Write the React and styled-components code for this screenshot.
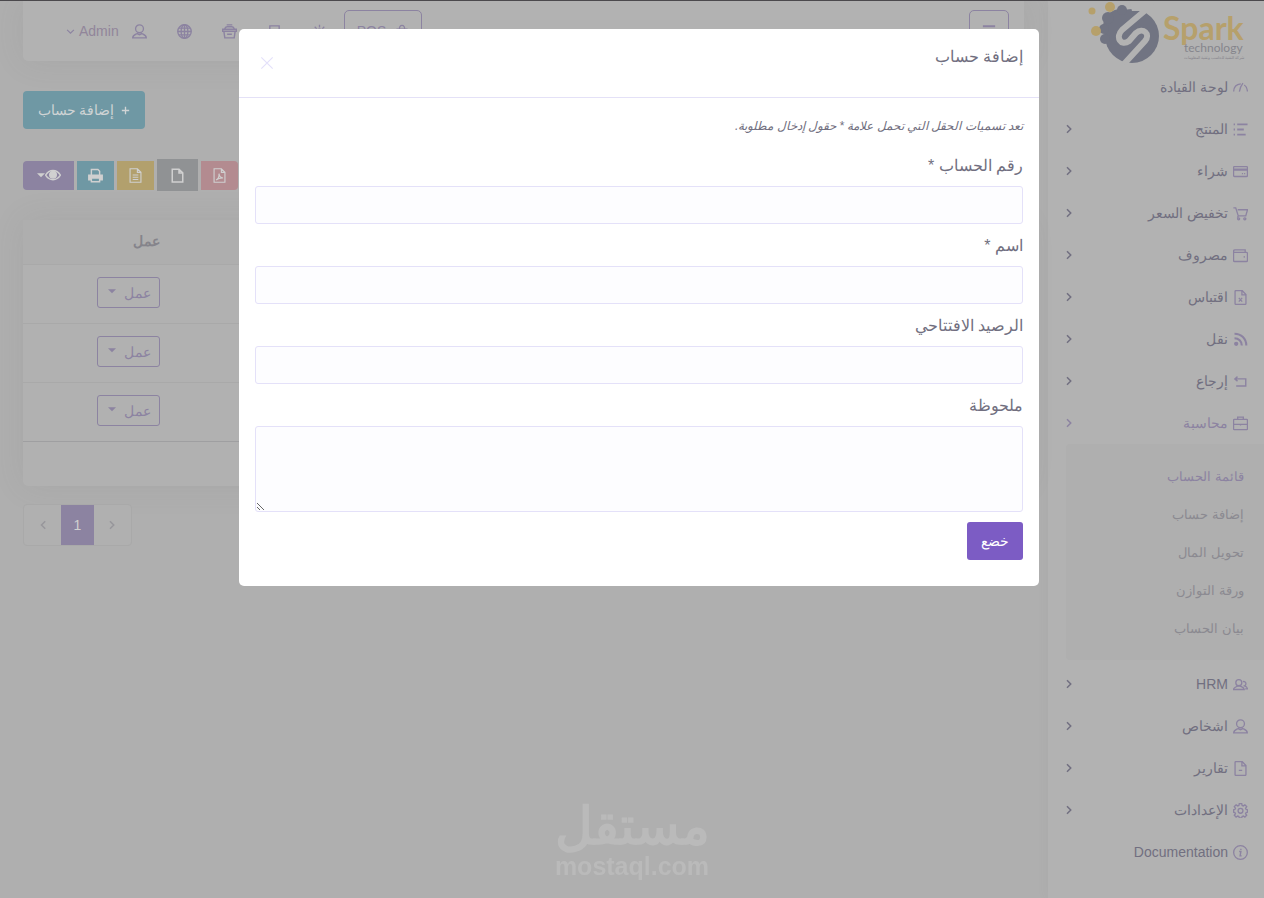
import React from "react";
import styled, { createGlobalStyle } from "styled-components";

const icons = {
  dashboard: (
    <path d="M.7 12.3C.9 7.5 3.4 4.6 8.3 4.2M6.8 12.3c.6-3.4 1.6-6.2 3.8-9M12 5.3c2.2 1.4 3.2 3.8 3.4 7" />
  ),
  list: (
    <path d="M4.5 2.5h11M4.5 8h7M4.5 13.5h9M.7 2.5h1.4M.7 8h1.4M.7 13.5h1.4" strokeWidth="2" />
  ),
  card: (
    <>
      <rect x=".6" y="2.7" width="14.8" height="10.6" rx="1" />
      <path d="M.6 5.4h14.8M.6 6.4h14.8M9.5 10.3h1.2M11.8 10.3H13" />
    </>
  ),
  cart: (
    <>
      <path d="M.4 2h2.5l2.7 8.6h8L15.5 4H5M5.6 10.6l-.9 1.8" />
      <circle cx="6" cy="13.7" r="1.1" />
      <circle cx="12.6" cy="13.7" r="1.1" />
    </>
  ),
  wallet: (
    <>
      <path d="M.6 3.6v9.8c0 .7.4 1 1 1h12.8c.6 0 1-.3 1-1V5.7c0-.6-.4-1-1-1H1.6c-.6 0-1-.4-1-1 0-.9.5-1.8 1.4-1.8h11v2.6" />
      <path d="M11.4 9.5h1.2" strokeWidth="1.8" />
    </>
  ),
  quote: (
    <path d="M9.8.6H3.2c-.6 0-1 .4-1 1v12.8c0 .6.4 1 1 1h9.6c.6 0 1-.4 1-1V4.8zM9.5.8v4.4h4.2M6.2 8.4l3.6 4M9.8 8.4l-3.6 4" />
  ),
  feed: (
    <>
      <path d="M1.6 1.8c7.2 0 12.6 5.4 12.6 12.6M1.6 6.6c4.4 0 7.8 3.4 7.8 7.8" strokeWidth="2.2" />
      <circle cx="3.4" cy="12.6" r="1.6" fill="currentColor" />
    </>
  ),
  back: <path d="M4.8 2.8 2 5.2l2.8 2.4M2.4 5.2h11.2v7.6H3.4" strokeWidth="1.5" />,
  briefcase: (
    <>
      <rect x=".6" y="3.6" width="14.8" height="11" rx=".8" />
      <path d="M5 3.4V1.2h6v2.2M.6 9h5.6M9.8 9h5.6M6.2 9h3.6M8 8.4v1.6" />
    </>
  ),
  users: (
    <>
      <circle cx="6.2" cy="6" r="3.2" />
      <path d="M.6 13.3c0-2 2.4-2.6 4-3.6h3.2c1.8 1 4.2 1.6 4.2 3.6zM10.6 4.9c2-.4 3.2.6 3.2 2.2 0 1.4-.8 2-1.6 2.4 1.8.6 3.2 1.4 3.2 3.2H13" />
    </>
  ),
  user: (
    <>
      <circle cx="8" cy="5.1" r="4.2" />
      <path d="M.7 14.8c0-2.6 2.4-3.4 4.8-4.6l2.5 1.2 2.5-1.2c2.4 1.2 4.8 2 4.8 4.6z" />
    </>
  ),
  report: (
    <path d="M9.8.6H3.2c-.6 0-1 .4-1 1v12.8c0 .6.4 1 1 1h9.6c.6 0 1-.4 1-1V4.8zM9.5.8v4.4h4.2M6.2 10h3.6" />
  ),
  gear: (
    <>
      <path d="M6.7.7h2.6l.4 1.9 1.3.5 1.7-1.1 1.9 1.9-1.2 1.7.6 1.2 1.500.4v2.600l-1.500.4-.6 1.200 1.200 1.700-1.900 1.900-1.700-1.100-1.300.5-.4 1.500H6.700l-.4-1.500-1.300-.5-1.700 1.100-1.900-1.900 1.200-1.700-.6-1.200-1.400-.4V7.200L2 6.800l.6-1.200-1.200-1.700L3.300 2 5 3.100l1.300-.5z" />
      <circle cx="8" cy="8.300" r="2.600" />
    </>
  ),
  info: (
    <>
      <circle cx="8" cy="8" r="7.3" />
      <path d="M6.6 7h1.8L7.6 11.6h1.6M8.4 4v1.4" strokeWidth="1.5" />
    </>
  ),
  globe: (
    <>
      <circle cx="8" cy="8" r="7.2" />
      <ellipse cx="8" cy="8" rx="3.6" ry="7.2" />
      <path d="M8 .8v14.4M.8 8h14.4M1.8 4.4h12.4M1.8 11.6h12.4" />
    </>
  ),
  basket: (
    <>
      <path d="M.6 5.6h14.8v2.2H.6zM2 7.8l1 7h10l1-7M5.5 11h5M2.8 5.4C3.2 3.8 4 3 5.4 3h5.2c1.4 0 2.2.8 2.6 2.4M5 .9h6" strokeWidth="1.5" />
    </>
  ),
  device: <path d="M3 2h10v13H3zM3 12h10" strokeWidth="1.5" />,
  sun: (
    <>
      <circle cx="8" cy="8" r="2.6" />
      <path d="M8 .8v2.800M8 12.400v2.800M.8 8h2.800M12.400 8h2.800M2.900 2.900l2 2M11.100 11.100l2 2M13.100 2.900l-2 2M4.900 11.100l-2 2" />
    </>
  ),
  bag: <path d="M2.400 6h11.200v9H2.400zM5 6c0-6 6-6 6 0" strokeWidth="1.500" />,
  menu: <path d="M1 2.500h14M1 8h14M1 13.500h14" strokeWidth="2.200" />,
  chevronRight: <path d="m4 3 5 5-5 5" strokeWidth="2" />,
  chevronLeft: <path d="m11 3-5 5 5 5" strokeWidth="2" />,
  chevronDown: <path d="m2 5 6 6 6-6" strokeWidth="2" />,
  close: <path d="m1.500 1.500 13 13M14.500 1.500l-13 13" />,
  plus: <path d="M8 1.500v13M1.500 8h13" strokeWidth="2.400" />,
  caret: <path d="M0 4.500h16l-8 8z" fill="currentColor" stroke="none" />,
  eye: (
    <>
      <path d="M.6 8.200C4.300 2 11.700 2 15.400 8.200 11.700 14.200 4.300 14.200.6 8.200z" strokeWidth="1.400" />
      <circle cx="8" cy="7.800" r="3.300" fill="currentColor" />
    </>
  ),
  print: (
    <>
      <path d="M.8 7.500h14.400v5.200h-2.600v-2H3.400v2H.8z" fill="currentColor" />
      <path d="M3.600 7.500V1.600h7l1.800 1.800v4.100M3.600 10.800v3.800h8.800v-3.800" strokeWidth="1.500" />
    </>
  ),
  csv: (
    <path d="M10 .8H2.200v14.400h11.600V4.600zM10 .8v3.800h3.800M5 7.400h6M5 9.800h6M5 12.200h6" strokeWidth="1.200" />
  ),
  file: <path d="M9.600 1.200H2.400v13.600h11.200V5.200zM9.600 1.200v4h4" strokeWidth="1.600" />,
  pdf: (
    <path d="M10 .8H2.200v14.400h11.600V4.600zM10 .8v3.800h3.800M4.400 12.800C6.400 11.600 7.800 8.600 7.400 6c.6 3.200 2 4.600 4.400 4.600-3-.2-5.200.4-7.400 2.200" strokeWidth="1.200" />
  ),
};

const Icon = ({ name, size = 15 }) => (
  <Glyph viewBox="0 0 16 16" width={size} height={size} aria-hidden="true">
    {icons[name]}
  </Glyph>
);

const mainMenu = [
  { icon: "dashboard", text: "لوحة القيادة" },
  { icon: "list", text: "المنتج", more: true },
  { icon: "card", text: "شراء", more: true },
  { icon: "cart", text: "تخفيض السعر", more: true },
  { icon: "wallet", text: "مصروف", more: true },
  { icon: "quote", text: "اقتباس", more: true },
  { icon: "feed", text: "نقل", more: true },
  { icon: "back", text: "إرجاع", more: true },
  { icon: "briefcase", text: "محاسبة", more: true, active: true },
];

const accountMenu = [
  "قائمة الحساب",
  "إضافة حساب",
  "تحويل المال",
  "ورقة التوازن",
  "بيان الحساب",
];

const lowerMenu = [
  { icon: "users", text: "HRM", more: true },
  { icon: "user", text: "اشخاص", more: true },
  { icon: "report", text: "تقارير", more: true },
  { icon: "gear", text: "الإعدادات", more: true },
  { icon: "info", text: "Documentation" },
];

const MenuList = ({ items }) => (
  <Menu>
    {items.map((item) => (
      <li key={item.text}>
        <MenuLink href="#" $active={item.active}>
          <Icon name={item.icon} />
          <span>{item.text}</span>
          {item.more && <Icon name="chevronRight" size={12} />}
        </MenuLink>
      </li>
    ))}
  </Menu>
);

const Logo = () => (
  <LogoSvg viewBox="0 0 160 64" width="160" height="64" role="img" aria-label="Spark technology">
    <g fill="#717482">
      <circle cx="44" cy="35" r="27" />
      <circle cx="33" cy="26" r="18" />
      <circle cx="34" cy="9" r="5" />
      <circle cx="20" cy="17" r="6" />
      <circle cx="16" cy="28" r="5" />
      <circle cx="17" cy="38" r="5" />
    </g>
    {/* white S cut through the gear */}
    <path
      d="M60 7 34 29C27 36 33 46 41 40L48 32C55 26 63 33 57 40L36 63"
      fill="none"
      stroke="#b2b2b2"
      strokeWidth="6"
    />
    <path d="M42 3h24l-6 7H44z" fill="#b2b2b2" />
    <g fill="#b6a06b">
      <circle cx="4" cy="10" r="3.5" />
      <circle cx="22" cy="6" r="5" />
      <circle cx="8" cy="30" r="5" />
    </g>
    <text x="75" y="39" fontFamily="Lato" fontWeight="700" fontSize="32" fill="#b6a06b">Spark</text>
    <text x="96" y="51" fontFamily="Lato" fontSize="12" fill="#85858c">technology</text>
    <text x="96" y="58" fontFamily="Noto Sans, sans-serif" fontSize="4" fill="#85858c">شركة التقنية للحاسب وتقنية المعلومات</text>
  </LogoSvg>
);

const App = () => {
  return (
    <>
      <GlobalStyle />
      <Page>
        <Sidebar>
          <Logo />
          <MenuList items={mainMenu} />
          <SubMenu>
            {accountMenu.map((text, i) => (
              <li key={text}>
                <SubLink href="#" $active={i === 0}>{text}</SubLink>
              </li>
            ))}
          </SubMenu>
          <MenuList items={lowerMenu} />
        </Sidebar>

        <Main>
          <Header>
            <HeaderTools>
              <UserButton>
                <Icon name="chevronDown" size={9} />
                <span>Admin</span>
                <Icon name="user" />
              </UserButton>
              <IconButton aria-label="Language"><Icon name="globe" /></IconButton>
              <IconButton aria-label="Register"><Icon name="basket" /></IconButton>
              <IconButton aria-label="Display"><Icon name="device" /></IconButton>
              <IconButton aria-label="Theme"><Icon name="sun" /></IconButton>
              <OutlineButton>POS <Icon name="bag" size={14} /></OutlineButton>
            </HeaderTools>
            <OutlineButton aria-label="Menu"><Icon name="menu" size={14} /></OutlineButton>
          </Header>

          <Content>
            <AddButton dir="rtl"><Icon name="plus" size={9} /> إضافة حساب</AddButton>
            <Toolbar>
              <ToolButton $color="#8c83a1" $wide aria-label="Columns">
                <Icon name="caret" size={8} /><Icon name="eye" size={16} />
              </ToolButton>
              <ToolButton $color="#6f98a4" aria-label="Print"><Icon name="print" /></ToolButton>
              <ToolButton $color="#b2a06d" aria-label="CSV"><Icon name="csv" /></ToolButton>
              <ToolButton $color="#909294" $large aria-label="Excel"><Icon name="file" /></ToolButton>
              <ToolButton $color="#b38b90" aria-label="PDF"><Icon name="pdf" /></ToolButton>
            </Toolbar>
            <TableCard>
              <Table dir="rtl">
                <thead>
                  <tr><th /><th>عمل</th></tr>
                </thead>
                <tbody>
                  {[1, 2, 3].map((id) => (
                    <tr key={id}>
                      <td />
                      <td>
                        <ActionButton>عمل <Icon name="caret" size={8} /></ActionButton>
                      </td>
                    </tr>
                  ))}
                </tbody>
                <tfoot>
                  <tr><td /><td /></tr>
                </tfoot>
              </Table>
            </TableCard>
            <Pagination>
              <PageButton aria-label="Next"><Icon name="chevronLeft" size={12} /></PageButton>
              <PageButton $current>1</PageButton>
              <PageButton aria-label="Previous"><Icon name="chevronRight" size={12} /></PageButton>
            </Pagination>
          </Content>
        </Main>
      </Page>

      <Watermark>
        <strong>مستقل</strong>
        <span>mostaql.com</span>
      </Watermark>

      <Overlay>
        <Modal role="dialog" aria-labelledby="modal-title">
          <ModalHeader>
            <h5 id="modal-title">إضافة حساب</h5>
            <CloseButton aria-label="Close"><Icon name="close" size={14} /></CloseButton>
          </ModalHeader>
          <ModalBody>
            <Note>تعد تسميات الحقل التي تحمل علامة * حقول إدخال مطلوبة.</Note>
            <Field>
              <label htmlFor="account_no">رقم الحساب *</label>
              <input id="account_no" type="text" />
            </Field>
            <Field>
              <label htmlFor="name">اسم *</label>
              <input id="name" type="text" />
            </Field>
            <Field>
              <label htmlFor="balance">الرصيد الافتتاحي</label>
              <input id="balance" type="text" />
            </Field>
            <Field>
              <label htmlFor="note">ملحوظة</label>
              <textarea id="note" />
            </Field>
            <SubmitButton type="button">خضع</SubmitButton>
          </ModalBody>
        </Modal>
      </Overlay>
    </>
  );
};

const GlobalStyle = createGlobalStyle`
  * {
    box-sizing: border-box;
  }
  body {
    margin: 0;
    background: #afafaf;
    color: #716f80;
    font-family: "Liberation Sans", "Noto Sans", sans-serif;
    font-size: 14px;
    overflow: hidden;
  }
  button, input, textarea {
    font: inherit;
  }
  button {
    cursor: pointer;
  }
  a {
    text-decoration: none;
  }
  ul {
    list-style: none;
    margin: 0;
    padding: 0;
  }
`;

const Glyph = styled.svg`
  display: block;
  flex: none;
  fill: none;
  stroke: currentColor;
  stroke-width: 1.4;
`;

const Page = styled.div`
  display: flex;
  direction: rtl;
  min-height: 100vh;
  border-top: 1px solid #4b494d;
`;

const Sidebar = styled.aside`
  flex: none;
  width: 216px;
  background: #b2b2b2;
  box-shadow: 0 0 12px rgba(100, 100, 100, 0.06);
`;

const LogoSvg = styled.svg`
  display: block;
  margin: 0 16px 1px auto;
  direction: ltr;
`;

const Menu = styled.ul`
  padding: 0 16px;
`;

const MenuLink = styled.a`
  display: flex;
  align-items: center;
  gap: 5px;
  height: 42px;
  color: ${({ $active }) => ($active ? "#8c83a1" : "#716f80")};

  svg:first-child {
    color: #8c83a1;
  }

  span {
    flex: 1;
  }
`;

const SubMenu = styled.ul`
  margin: 0 0 3px 18px;
  padding: 13px 20px;
  border-radius: 4px 0 0 4px;
  background: #afafaf;
`;

const SubLink = styled.a`
  display: flex;
  align-items: center;
  height: 38px;
  font-size: 13px;
  color: ${({ $active }) => ($active ? "#8c83a1" : "#8b8a91")};
`;

const Main = styled.main`
  direction: ltr;
  flex: 1;
  padding: 0 24px 0 23px;
`;

const Header = styled.header`
  display: flex;
  align-items: center;
  justify-content: space-between;
  height: 60px;
  padding: 0 15px 0 43px;
  background: #b2b2b2;
  border-radius: 0 0 5px 5px;
  box-shadow: 0 0 32px rgba(100, 100, 100, 0.1);
`;

const HeaderTools = styled.div`
  display: flex;
  align-items: center;
  gap: 30px;

  button:last-child {
    margin-left: -13px;
  }
`;

const IconButton = styled.button`
  display: flex;
  align-items: center;
  padding: 0;
  border: none;
  background: none;
  color: #8c83a1;
`;

const UserButton = styled(IconButton)`
  gap: 4px;

  span {
    margin-right: 9px;
    color: #91859a;
  }
`;

const OutlineButton = styled.button`
  display: flex;
  align-items: center;
  justify-content: center;
  gap: 9px;
  height: 42px;
  padding: 0 12px;
  border: 1px solid #8c83a1;
  border-radius: 5px;
  background: none;
  color: #8c83a1;
`;

const Content = styled.section`
  padding-top: 30px;
`;

const AddButton = styled.button`
  display: flex;
  align-items: center;
  justify-content: center;
  gap: 7px;
  width: 122px;
  height: 38px;
  padding: 0;
  border: none;
  border-radius: 4px;
  background: #6f98a4;
  color: #d0d4d5;
`;

const Toolbar = styled.div`
  display: flex;
  align-items: center;
  gap: 3px;
  margin-top: 30px;
`;

const ToolButton = styled.button`
  display: flex;
  align-items: center;
  justify-content: center;
  width: ${({ $wide, $large }) => ($wide ? "51px" : $large ? "41px" : "37px")};
  height: ${({ $large }) => ($large ? "32px" : "29px")};
  padding: 0;
  border: none;
  background: ${({ $color }) => $color};
  color: #d0d0d0;

  &:first-child {
    border-radius: 4px 0 0 4px;
  }

  &:last-child {
    border-radius: 0 4px 4px 0;
  }
`;

const TableCard = styled.div`
  margin-top: 29px;
  border-radius: 5px;
  background: #b1b1b1;
  box-shadow: 0 0 32px rgba(100, 100, 100, 0.1);
`;

const Table = styled.table`
  width: 100%;
  border-collapse: collapse;

  th, td {
    height: 59px;
    padding: 0 10px 2px 0;
    border-bottom: 1px solid #a9a9a9;
    text-align: right;
    vertical-align: middle;
  }

  th {
    height: 44px;
    background: #aeaeae;
    font-size: 14px;
    font-weight: 700;
    color: #85848b;
  }

  th:last-child {
    width: 147px;
  }

  tbody tr:last-child td {
    border-bottom-color: #9f9fa1;
  }

  tfoot td {
    height: 45px;
    border: none;
  }
`;

const ActionButton = styled.button`
  display: flex;
  align-items: center;
  justify-content: center;
  gap: 8px;
  width: 63px;
  height: 31px;
  padding: 0 0 0 2px;
  border: 1px solid #8c83a1;
  border-radius: 3px;
  background: none;
  color: #8c83a1;

  svg {
    margin-bottom: 4px;
  }
`;

const Pagination = styled.nav`
  display: inline-flex;
  margin-top: 18px;
  border: 1px solid #a9a9a9;
  border-radius: 4px;
  background: #b0b0b0;
`;

const PageButton = styled.button`
  display: flex;
  align-items: center;
  justify-content: center;
  width: ${({ $current }) => ($current ? "33px" : "37px")};
  height: 40px;
  padding: 0;
  border: none;
  background: ${({ $current }) => ($current ? "#8c83a1" : "none")};
  color: ${({ $current }) => ($current ? "#d0d0d0" : "#97969b")};
`;

const Watermark = styled.div`
  position: fixed;
  left: 0;
  right: 0;
  bottom: 18px;
  display: flex;
  flex-direction: column;
  align-items: center;
  font-weight: 700;
  color: #bababa;

  strong {
    font-size: 52px;
    line-height: 52px;
  }

  span {
    font-size: 25px;
    line-height: 28px;
  }
`;

const Overlay = styled.div`
  position: fixed;
  inset: 0;
  display: flex;
  justify-content: center;
  align-items: flex-start;
  padding: 29px 0 0 14px;
  direction: rtl;
`;

const Modal = styled.div`
  width: 100%;
  max-width: 800px;
  border-radius: 5px;
  background: #fff;
`;

const ModalHeader = styled.div`
  display: flex;
  align-items: flex-start;
  justify-content: space-between;
  height: 69px;
  padding: 16px;
  border-bottom: 1px solid #e4e1f7;

  h5 {
    margin: 0;
    font-size: 16px;
    font-weight: 400;
    line-height: 24px;
  }
`;

const CloseButton = styled.button`
  margin: 11px 5px 0;
  padding: 0;
  border: none;
  background: none;
  color: #e4e1fa;
`;

const ModalBody = styled.div`
  padding: 16px 16px 26px;
`;

const Note = styled.p`
  margin: 0 0 16px;
  font-size: 12px;
  font-style: italic;
  line-height: 24px;
`;

const Field = styled.div`
  display: flex;
  flex-direction: column;
  gap: 8px;
  margin-bottom: 10px;

  label {
    font-size: 16px;
    line-height: 24px;
  }

  input, textarea {
    width: 100%;
    height: 38px;
    padding: 6px 12px;
    border: 1px solid #e4e1f9;
    border-radius: 3px;
    background: #fdfdff;
    outline: none;
  }

  textarea {
    height: 86px;
    resize: vertical;
  }
`;

const SubmitButton = styled.button`
  width: 56px;
  height: 38px;
  padding: 0;
  border: none;
  border-radius: 3px;
  background: #7c5cc4;
  color: #fff;
`;

export default App;
